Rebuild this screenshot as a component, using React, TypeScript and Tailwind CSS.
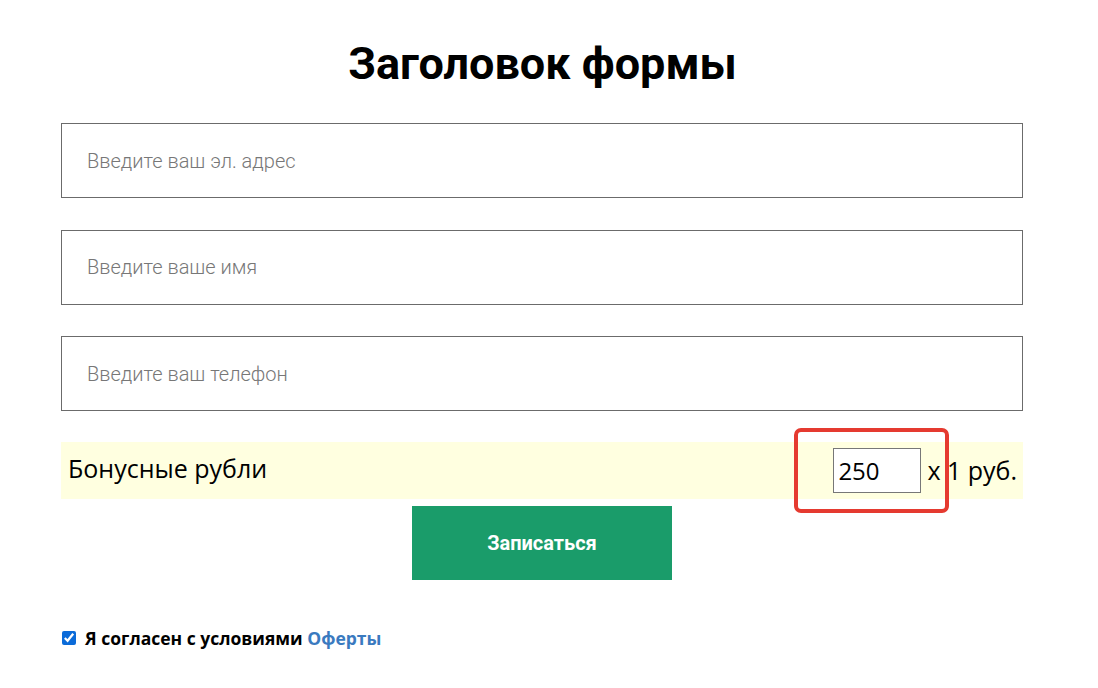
import React from "react";

export default function App() {
  return (
    <div className="w-[1098px] h-[688px] bg-white relative">
      <div className="w-[962px] ml-[61px] flex flex-col">
        <h1 className="mt-[36px] h-[56px] text-center text-[45px] leading-[56px] font-bold text-black font-['Roboto',sans-serif] pl-[1px]">
          Заголовок формы
        </h1>
        <div className="mt-[31px] flex flex-col gap-[31.5px]">
          {["Введите ваш эл. адрес", "Введите ваше имя", "Введите ваш телефон"].map((p) => (
            <input
              key={p}
              placeholder={p}
              className="h-[75px] w-full border border-[#6b6b6b] px-[25px] text-[20px] font-light font-['Roboto',sans-serif] text-black placeholder:text-[#777] outline-none"
            />
          ))}
        </div>
        <div className="mt-[31px] h-[57px] bg-[#ffffe0] flex items-center justify-between pl-[7px] pr-[6px] font-['Open_Sans',sans-serif] text-black">
          <span className="text-[25px] leading-none -mt-[4px]">Бонусные рубли</span>
          <div className="flex items-center gap-[6px]">
            <input
              defaultValue="250"
              className="w-[88px] h-[45px] border border-[#777] bg-white px-[4px] text-[24px] font-['Open_Sans',sans-serif] outline-none"
            />
            <span className="text-[25px] leading-none">x 1 руб.</span>
          </div>
        </div>
        <button className="self-center mt-[7px] w-[260px] h-[74px] bg-[#1a9c6a] text-white font-bold text-[20px] font-['Roboto',sans-serif]">
          Записаться
        </button>
        <label className="mt-[46px] flex items-center gap-[9px] font-['Open_Sans',sans-serif] font-bold text-[17.5px] leading-[24px] text-black">
          <input type="checkbox" defaultChecked className="w-[14px] h-[14px] ml-[1px] accent-[#0b6bd9]" />
          <span>
            Я согласен с условиями <span className="text-[#3a7abf]">Оферты</span>
          </span>
        </label>
      </div>
      <div className="absolute left-[794px] top-[428px] w-[155px] h-[85px] border-[4px] border-[#e53a30] rounded-[7px] pointer-events-none" />
    </div>
  );
}
